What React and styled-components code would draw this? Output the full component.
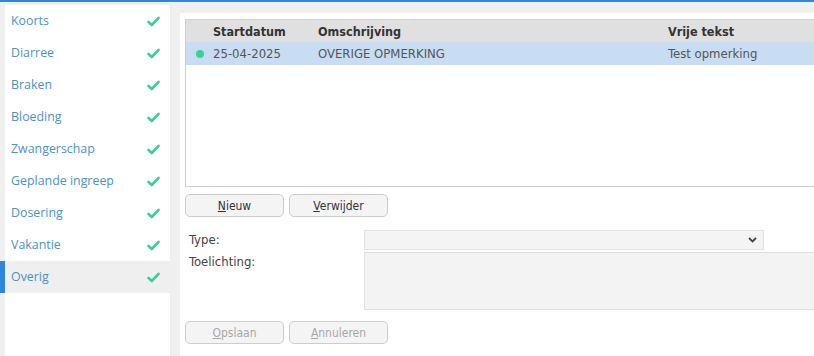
import React from "react";
import styled, { createGlobalStyle } from "styled-components";

const GlobalStyle = createGlobalStyle`
  html, body { margin: 0; padding: 0; background: #efefef; }
  body { width: 814px; height: 356px; overflow: hidden; }
  * { box-sizing: border-box; }
`;

const Page = styled.div`
  width: 814px;
  height: 356px;
  overflow: hidden;
  border-top: 2px solid #2f86dc;
  background: #efefef;
  display: flex;
  align-items: stretch;
  padding-top: 3px;
`;

const Sidebar = styled.nav`
  width: 170px;
  flex: none;
  border-left: 5px solid #efefef;
  background: #fff;
  display: flex;
  flex-direction: column;
  font-family: "Open Sans", "Noto Sans", sans-serif;
  font-size: 12.4px;
`;

const NavItem = styled.div`
  height: 32px;
  display: flex;
  align-items: center;
  justify-content: space-between;
  padding: 0 10px 2px 6px;
  color: #4a92c9;
  background: ${(p) => (p.$active ? "#efefef" : "#fff")};
  margin-left: ${(p) => (p.$active ? "-5px" : "0")};
  border-left: ${(p) => (p.$active ? "5px solid #2f86dc" : "none")};
`;

const Check = () => (
  <svg width="13" height="11" viewBox="0 0 13 11" style={{ marginTop: 2 }}>
    <path d="M1.5 6 L4.8 9 L11.5 1.8" fill="none" stroke="#3fcd9a" strokeWidth="2.6" strokeLinecap="round" strokeLinejoin="round" />
  </svg>
);

const Main = styled.main`
  flex: none;
  width: 660px;
  margin-left: 10px;
  margin-top: 8px;
  background: #fff;
  padding: 6px 0 0 5px;
  font-family: "DejaVu Sans Condensed", "DejaVu Sans", sans-serif;
  font-size: 13px;
  color: #555;
`;

const Table = styled.div`
  height: 168px;
  border: 1px solid #cfcfcf;
  border-right: none;
  display: flex;
  flex-direction: column;
`;

const Row = styled.div`
  display: grid;
  grid-template-columns: 27px 105px 350px 1fr;
  align-items: center;
  height: ${(p) => (p.$head ? "22px" : "23px")};
  background: ${(p) => (p.$head ? "#e0e0e0" : p.$selected ? "#c9ddf2" : "#fff")};
  font-weight: ${(p) => (p.$head ? "bold" : "normal")};
  font-size: ${(p) => (p.$head ? "12.5px" : "13px")};
  color: ${(p) => (p.$head ? "#333" : "#555")};
  white-space: nowrap;
`;

const Dot = styled.span`
  width: 8px;
  height: 8px;
  border-radius: 50%;
  background: #3fcd9a;
  justify-self: center;
`;

const ButtonRow = styled.div`
  display: flex;
  gap: 5px;
  margin-top: ${(p) => p.$top}px;
`;

const Button = styled.button`
  width: 99px;
  height: 23px;
  border: 1px solid #cdcdcd;
  border-radius: 5px;
  background: #f4f4f4;
  font-family: "DejaVu Sans Condensed", "DejaVu Sans", sans-serif;
  font-size: 12px;
  color: ${(p) => (p.disabled ? "#a8a8a8" : "#333")};
  padding: 0;
  u { text-decoration: underline; }
`;

const Form = styled.div`
  display: grid;
  grid-template-columns: 179px 1fr;
  row-gap: 2px;
  margin-top: 13px;
  align-items: start;
`;

const Label = styled.label`
  padding-left: 4px;
  line-height: 20px;
  color: #444;
`;

const Select = styled.div`
  width: 400px;
  height: 20px;
  border: 1px solid #e3e3e3;
  background: #f4f4f4;
  display: flex;
  align-items: center;
  justify-content: flex-end;
  padding-right: 6px;
`;

const TextArea = styled.div`
  height: 58px;
  border: 1px solid #e0e0e0;
  border-right: none;
  background: #f3f3f3;
`;

const Chevron = () => (
  <svg width="9" height="6" viewBox="0 0 9 6">
    <path d="M1 1 L4.5 4.5 L8 1" fill="none" stroke="#444" strokeWidth="1.8" />
  </svg>
);

const items = ["Koorts", "Diarree", "Braken", "Bloeding", "Zwangerschap", "Geplande ingreep", "Dosering", "Vakantie", "Overig"];

export default function App() {
  return (
    <>
      <GlobalStyle />
      <Page>
        <Sidebar>
          {items.map((it) => (
            <NavItem key={it} $active={it === "Overig"}>
              <span>{it}</span>
              <Check />
            </NavItem>
          ))}
        </Sidebar>
        <Main>
          <Table>
            <Row $head>
              <span />
              <span>Startdatum</span>
              <span>Omschrijving</span>
              <span>Vrije tekst</span>
            </Row>
            <Row $selected>
              <Dot />
              <span>25-04-2025</span>
              <span>OVERIGE OPMERKING</span>
              <span>Test opmerking</span>
            </Row>
          </Table>
          <ButtonRow $top={7}>
            <Button><u>N</u>ieuw</Button>
            <Button><u>V</u>erwijder</Button>
          </ButtonRow>
          <Form>
            <Label>Type:</Label>
            <Select><Chevron /></Select>
            <Label>Toelichting:</Label>
            <TextArea />
          </Form>
          <ButtonRow $top={11}>
            <Button disabled><u>O</u>pslaan</Button>
            <Button disabled><u>A</u>nnuleren</Button>
          </ButtonRow>
        </Main>
      </Page>
    </>
  );
}
